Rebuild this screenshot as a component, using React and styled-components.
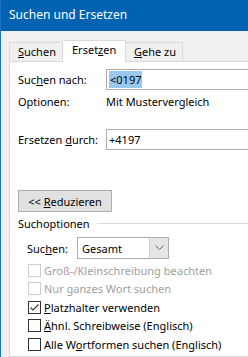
import React from 'react';
import styled, { createGlobalStyle } from 'styled-components';

const Global = createGlobalStyle`
    html, body {
        margin: 0;
        padding: 0;
        background: #f0f0f0;
    }
    body {
        font-family: "Noto Sans", "Open Sans", sans-serif;
        font-size: 11px;
        color: #000;
    }
`;

const checks = [
    { label: <>Groß-/Kleinschreibung beachten</>, disabled: true },
    { label: <>Nur ganzes Wort suchen</>, disabled: true },
    { label: <><u>P</u>latzhalter verwenden</>, checked: true },
    { label: <><u>Ä</u>hnl. Schreibweise (Englisch)</> },
    { label: <>Alle W<u>o</u>rtformen suchen (Englisch)</> },
];

export default function App() {
    return (
        <>
            <Global />
            <Window>
                <TitleBar>Suchen und Ersetzen</TitleBar>
                <Body>
                    <TabStrip>
                        <Tab w={54}><u>S</u>uchen</Tab>
                        <Tab w={63} active>Erset<u>z</u>en</Tab>
                        <Tab w={57}><u>G</u>ehe zu</Tab>
                    </TabStrip>
                    <Panel>
                        <FieldRow>
                            <Label>Suc<u>h</u>en nach:</Label>
                            <Input><Selected>&lt;0197</Selected></Input>
                        </FieldRow>
                        <InfoRow>
                            <Label>Optionen:</Label>
                            <span>Mit Mustervergleich</span>
                        </InfoRow>
                        <FieldRow second>
                            <Label>Ersetzen <u>d</u>urch:</Label>
                            <Input><span>+4197</span></Input>
                        </FieldRow>
                        <Button><span>&lt;&lt; <u>R</u>eduzieren</span></Button>
                        <GroupTitle>Suchoptionen</GroupTitle>
                        <SelectRow>
                            <SelectLabel>Suc<u>h</u>en:</SelectLabel>
                            <Select>
                                <SelectText>Gesamt</SelectText>
                                <SelectArrow>
                                    <svg width="9" height="6" viewBox="0 0 9 6">
                                        <path d="M0.5 0.5 L4.5 4.5 L8.5 0.5" fill="none" stroke="#606060" strokeWidth="1" />
                                    </svg>
                                </SelectArrow>
                            </Select>
                        </SelectRow>
                        <CheckList>
                            {checks.map((c, i) => (
                                <CheckRow key={i} disabled={c.disabled}>
                                    <Box disabled={c.disabled}>
                                        {c.checked && (
                                            <svg width="11" height="11" viewBox="0 0 11 11">
                                                <path d="M1.5 5.5 L4 8 L9.5 2.5" fill="none" stroke="#333" strokeWidth="1.1" />
                                            </svg>
                                        )}
                                    </Box>
                                    <span>{c.label}</span>
                                </CheckRow>
                            ))}
                        </CheckList>
                    </Panel>
                </Body>
            </Window>
        </>
    );
}

const Window = styled.div`
    width: 248px;
    height: 357px;
    overflow: hidden;
    border-left: 1px solid #1a73c8;
    box-sizing: border-box;
    background: #f0f0f0;
    display: flex;
    flex-direction: column;
`;

const TitleBar = styled.div`
    height: 31px;
    flex-shrink: 0;
    background: #0063b1;
    color: #fff;
    font-size: 12px;
    line-height: 29px;
    padding-left: 9px;
    margin-left: -1px;
`;

const Body = styled.div`
    flex: 1;
    padding: 9px 0 0 8px;
    display: flex;
    flex-direction: column;
    min-height: 0;
`;

const TabStrip = styled.div`
    display: flex;
    align-items: flex-end;
    height: 22px;
    position: relative;
    z-index: 1;
    margin-bottom: -1px;
`;

const Tab = styled.div`
    box-sizing: border-box;
    width: ${({ w }) => w}px;
    height: ${({ active }) => active ? 22 : 20}px;
    padding-left: ${({ active }) => active ? 9 : 8}px;
    border: 1px solid #d9d9d9;
    border-bottom: ${({ active }) => active ? 'none' : '1px solid #d9d9d9'};
    background: ${({ active }) => active ? '#fff' : '#f0f0f0'};
    line-height: ${({ active }) => active ? 17 : 18}px;
    & + & { border-left: none; }
`;

const Panel = styled.div`
    flex: 1;
    background: #fff;
    border: 1px solid #d9d9d9;
    border-right: none;
    padding: 7px 0 0 8px;
    display: flex;
    flex-direction: column;
`;

const FieldRow = styled.div`
    display: flex;
    align-items: center;
    height: 21px;
    margin-top: ${({ second }) => second ? 18 : 0}px;
`;

const InfoRow = styled.div`
    display: flex;
    height: 20px;
    align-items: center;
    margin-top: 1px;
`;

const Label = styled.span`
    width: 88px;
    flex-shrink: 0;
`;

const Input = styled.div`
    flex: 1;
    height: 21px;
    box-sizing: border-box;
    border: 1px solid #adadad;
    border-right: none;
    display: flex;
    align-items: center;
    padding-left: 2px;
`;

const Selected = styled.span`
    background: #99c9ef;
    padding: 1px 1px;
`;

const Button = styled.div`
    margin-top: 40px;
    width: 94px;
    height: 22px;
    box-sizing: border-box;
    border: 1px solid #adadad;
    background: #e1e1e1;
    display: flex;
    align-items: center;
    justify-content: center;
`;

const GroupTitle = styled.div`
    display: flex;
    align-items: center;
    height: 16px;
    gap: 7px;
    margin-top: 3px;
    &::after {
        content: '';
        flex: 1;
        height: 1px;
        background: #dcdcdc;
    }
`;

const SelectRow = styled.div`
    display: flex;
    align-items: center;
    padding-left: 9px;
    margin-top: 6px;
`;

const SelectLabel = styled.span`
    width: 50px;
`;

const Select = styled.div`
    width: 92px;
    height: 22px;
    box-sizing: border-box;
    border: 1px solid #adadad;
    display: flex;
`;

const SelectText = styled.div`
    flex: 1;
    padding-left: 4px;
    display: flex;
    align-items: center;
`;

const SelectArrow = styled.div`
    width: 18px;
    background: #e5e5e5;
    border-left: 1px solid #cfcfcf;
    display: flex;
    align-items: center;
    justify-content: center;
`;

const CheckList = styled.div`
    display: flex;
    flex-direction: column;
    padding-left: 10px;
    margin-top: 2px;
`;

const CheckRow = styled.div`
    display: flex;
    align-items: center;
    height: 18.5px;
    gap: 3px;
    color: ${({ disabled }) => disabled ? '#a0a0a0' : '#000'};
`;

const Box = styled.div`
    width: 13px;
    height: 13px;
    box-sizing: border-box;
    border: 1px solid ${({ disabled }) => disabled ? '#cccccc' : '#333333'};
    background: #fff;
    display: flex;
    align-items: center;
    justify-content: center;
`;
